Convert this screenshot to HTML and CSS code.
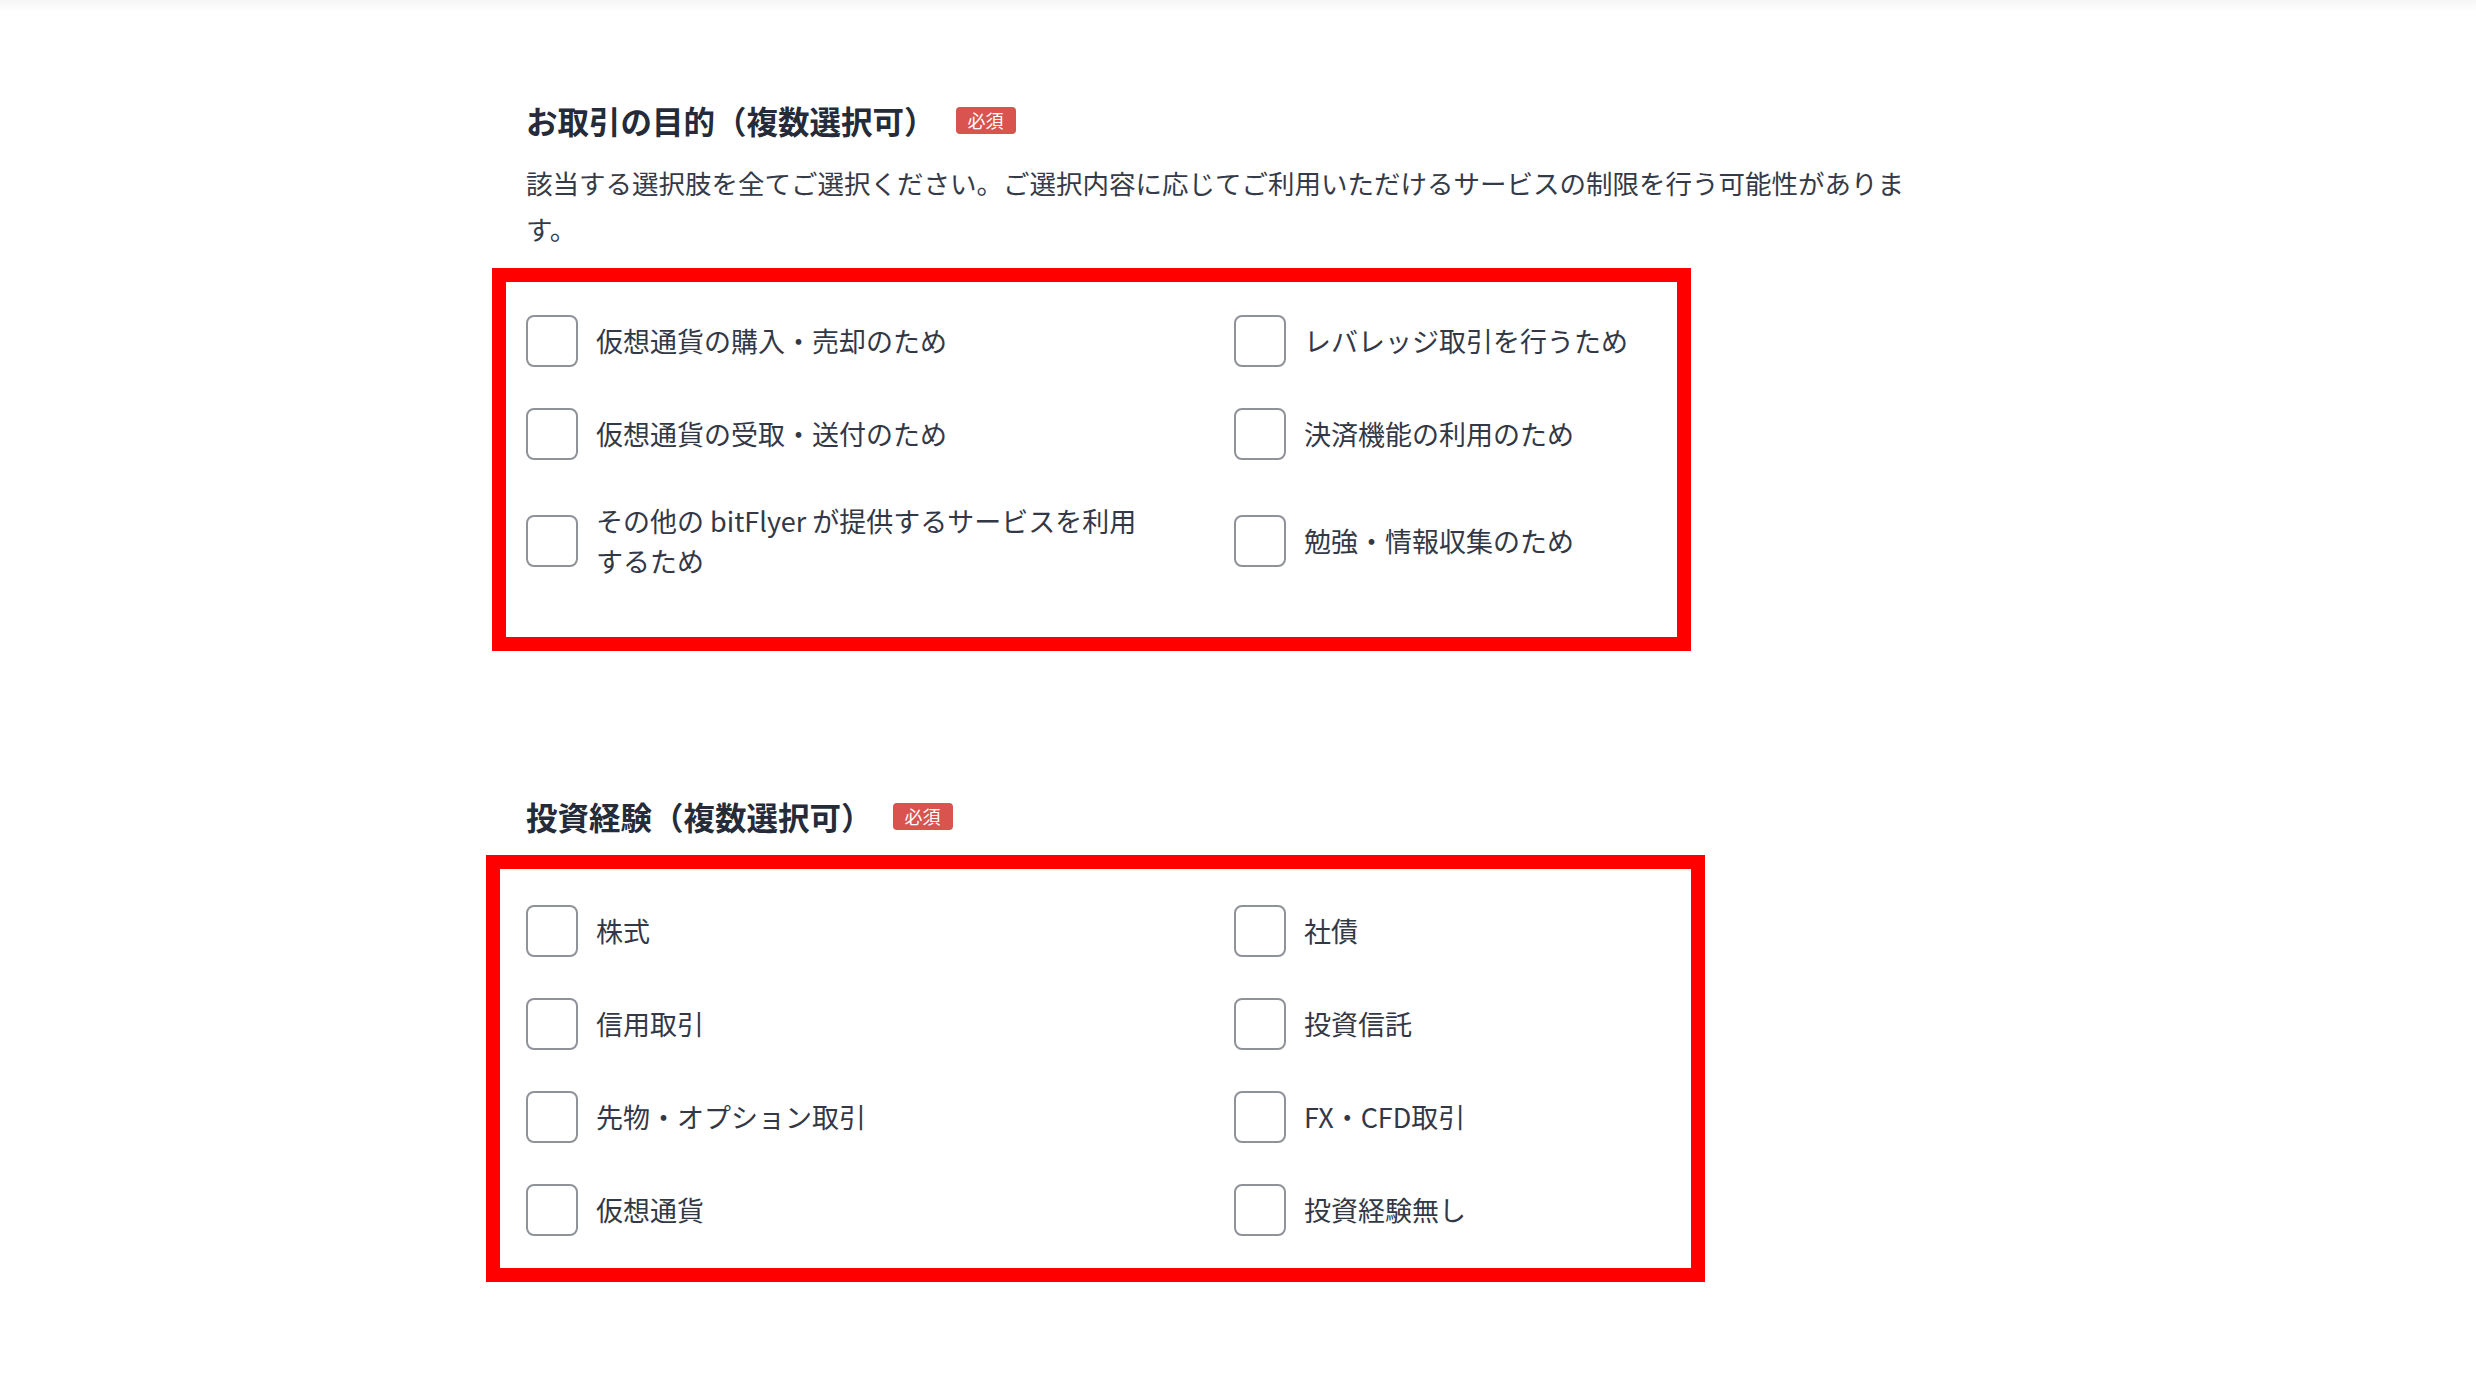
FILE: index.html
```html
<!DOCTYPE html>
<html lang="ja">
<head>
<meta charset="utf-8">
<title>お取引の目的</title>
<link rel="stylesheet" href="styles.css">
</head>
<body>
<div class="topshade"></div>
<main class="container">
  <section class="field field-purpose">
    <div class="field-head">
      <h2 class="field-title">お取引の目的（複数選択可）</h2>
      <span class="badge">必須</span>
    </div>
    <p class="field-desc">該当する選択肢を全てご選択ください。ご選択内容に応じてご利用いただけるサービスの制限を行う可能性があります。</p>
    <div class="frame frame-1">
      <div class="options">
        <label class="option"><span class="check"></span><span class="option-text">仮想通貨の購入・売却のため</span></label>
        <label class="option"><span class="check"></span><span class="option-text">レバレッジ取引を行うため</span></label>
        <label class="option"><span class="check"></span><span class="option-text">仮想通貨の受取・送付のため</span></label>
        <label class="option"><span class="check"></span><span class="option-text">決済機能の利用のため</span></label>
        <label class="option"><span class="check"></span><span class="option-text">その他の bitFlyer が提供するサービスを利用するため</span></label>
        <label class="option"><span class="check"></span><span class="option-text">勉強・情報収集のため</span></label>
      </div>
    </div>
  </section>

  <section class="field field-experience">
    <div class="field-head">
      <h2 class="field-title">投資経験（複数選択可）</h2>
      <span class="badge">必須</span>
    </div>
    <div class="frame frame-2">
      <div class="options">
        <label class="option"><span class="check"></span><span class="option-text">株式</span></label>
        <label class="option"><span class="check"></span><span class="option-text">社債</span></label>
        <label class="option"><span class="check"></span><span class="option-text">信用取引</span></label>
        <label class="option"><span class="check"></span><span class="option-text">投資信託</span></label>
        <label class="option"><span class="check"></span><span class="option-text">先物・オプション取引</span></label>
        <label class="option"><span class="check"></span><span class="option-text">FX・CFD取引</span></label>
        <label class="option"><span class="check"></span><span class="option-text">仮想通貨</span></label>
        <label class="option"><span class="check"></span><span class="option-text">投資経験無し</span></label>
      </div>
    </div>
  </section>
</main>
</body>
</html>
```

FILE: styles.css
```css
* {
  box-sizing: border-box;
}

html, body {
  margin: 0;
  padding: 0;
  background: #ffffff;
}

body {
  font-family: "Noto Sans CJK JP", "Noto Sans", "Liberation Sans", sans-serif;
  color: #333846;
}

.topshade {
  height: 12px;
  background: linear-gradient(to bottom, #f6f6f6, #ffffff);
}

.container {
  width: 1424px;
  margin: 0 auto;
}

.field-head {
  display: flex;
  align-items: center;
  gap: 20px;
}

.field-title {
  margin: 0;
  font-size: 31.5px;
  line-height: 44px;
  font-weight: 700;
  color: #252b38;
}

.badge {
  display: inline-block;
  height: 27px;
  padding: 0 12px;
  border-radius: 4px;
  background: #d9534f;
  color: #ffffff;
  font-size: 18px;
  line-height: 27px;
  font-weight: 400;
}

.field-purpose {
  padding-top: 86px;
}

.field-desc {
  margin: 18px 0 0;
  width: 1392px;
  font-size: 26.5px;
  line-height: 46px;
  color: #353a48;
}

.frame {
  border: 14px solid #ff0000;
}

.frame-1 {
  margin: 16px 0 0 -34px;
  width: 1199px;
  padding: 33px 0 56px 20px;
}

.field-experience {
  padding-top: 143px;
}

.frame-2 {
  margin: 17px 0 0 -40px;
  width: 1219px;
  padding: 36px 0 32px 26px;
}

.options {
  display: grid;
  grid-template-columns: 628px 1fr;
  column-gap: 80px;
  row-gap: 41px;
}

.option {
  display: flex;
  align-items: center;
  gap: 18px;
  cursor: pointer;
}

.check {
  flex-shrink: 0;
  width: 52px;
  height: 52px;
  border: 2px solid #8f9399;
  border-radius: 8px;
  background: #ffffff;
}

.option-text {
  font-size: 27px;
  line-height: 40px;
  color: #333846;
}
```
